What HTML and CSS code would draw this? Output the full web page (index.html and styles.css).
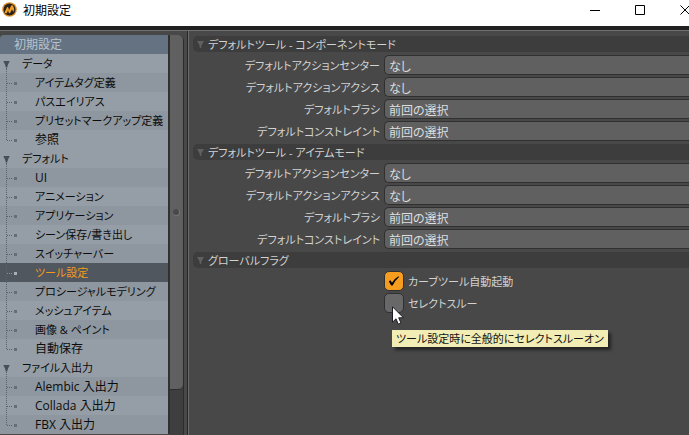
FILE: index.html
```html
<!DOCTYPE html>
<html lang="ja">
<head>
<meta charset="utf-8">
<title>初期設定</title>
<link rel="stylesheet" href="styles.css">
</head>
<body>
<header class="titlebar">
  <svg class="logo" viewBox="0 0 15 15" aria-hidden="true">
    <circle cx="7.5" cy="7.5" r="7.3" fill="#dd922b"/>
    <circle cx="7.5" cy="7.5" r="6" fill="#2b2119"/>
    <path d="M2.500 10.800L4.600 6C5 4.800 6.300 4.800 6.500 6L7 8.200L8.800 4.200C9.300 3 11 3 11.200 4.300L12.200 7.500L11.200 10L10 7.200L8.200 10.800C7.800 11.500 6.900 11.400 6.700 10.600L6 8.300L4.800 11.200Z" fill="#f2a22a"/>
  </svg>
  <h1 class="title">初期設定</h1>
  <button class="winbtn" type="button" aria-label="最小化"><svg viewBox="0 0 10 10"><path d="M0 5.500H10"/></svg></button>
  <button class="winbtn" type="button" aria-label="最大化"><svg viewBox="0 0 10 10"><path d="M.5 .5H9.500V9.500H.5Z"/></svg></button>
  <button class="winbtn winbtn-close" type="button" aria-label="閉じる"><svg viewBox="0 0 10 10"><path d="M.5 .5L9.500 9.500M9.500 .5L.5 9.500"/></svg></button>
</header>
<div class="workspace">
  <nav class="sidebar">
    <div class="tree">
      <div class="tree-head">初期設定</div>
      <ul class="tree-list">
        <li><button type="button" class="row group kana">データ</button>
          <ul class="branch">
            <li><button type="button" class="row leaf kana">アイテムタグ定義</button></li>
            <li><button type="button" class="row leaf kana">パスエイリアス</button></li>
            <li><button type="button" class="row leaf kana">プリセットマークアップ定義</button></li>
            <li><button type="button" class="row leaf">参照</button></li>
          </ul>
        </li>
        <li><button type="button" class="row group kana">デフォルト</button>
          <ul class="branch">
            <li><button type="button" class="row leaf">UI</button></li>
            <li><button type="button" class="row leaf kana">アニメーション</button></li>
            <li><button type="button" class="row leaf kana">アプリケーション</button></li>
            <li><button type="button" class="row leaf kana">シーン保存/書き出し</button></li>
            <li><button type="button" class="row leaf kana">スイッチャーバー</button></li>
            <li><button type="button" class="row leaf kana selected">ツール設定</button></li>
            <li><button type="button" class="row leaf kana">プロシージャルモデリング</button></li>
            <li><button type="button" class="row leaf kana">メッシュアイテム</button></li>
            <li><button type="button" class="row leaf kana">画像 &amp; ペイント</button></li>
            <li><button type="button" class="row leaf">自動保存</button></li>
          </ul>
        </li>
        <li><button type="button" class="row group kana">ファイル入出力</button>
          <ul class="branch">
            <li><button type="button" class="row leaf">Alembic 入出力</button></li>
            <li><button type="button" class="row leaf">Collada 入出力</button></li>
            <li><button type="button" class="row leaf">FBX 入出力</button></li>
          </ul>
        </li>
      </ul>
    </div>
    <div class="scrollbar"><div class="thumb"></div></div>
  </nav>
  <main class="panel">
    <section class="section">
      <h2 class="section-head kana">デフォルトツール - コンポーネントモード</h2>
      <div class="field"><label class="kana" for="c1">デフォルトアクションセンター</label><select id="c1"><option>なし</option></select></div>
      <div class="field"><label class="kana" for="c2">デフォルトアクションアクシス</label><select id="c2"><option>なし</option></select></div>
      <div class="field"><label class="kana" for="c3">デフォルトブラシ</label><select id="c3"><option>前回の選択</option></select></div>
      <div class="field"><label class="kana" for="c4">デフォルトコンストレイント</label><select id="c4"><option>前回の選択</option></select></div>
    </section>
    <section class="section">
      <h2 class="section-head kana">デフォルトツール - アイテムモード</h2>
      <div class="field"><label class="kana" for="i1">デフォルトアクションセンター</label><select id="i1"><option>なし</option></select></div>
      <div class="field"><label class="kana" for="i2">デフォルトアクションアクシス</label><select id="i2"><option>なし</option></select></div>
      <div class="field"><label class="kana" for="i3">デフォルトブラシ</label><select id="i3"><option>前回の選択</option></select></div>
      <div class="field"><label class="kana" for="i4">デフォルトコンストレイント</label><select id="i4"><option>前回の選択</option></select></div>
    </section>
    <section class="section">
      <h2 class="section-head kana">グローバルフラグ</h2>
      <div class="check">
        <span class="box"><input type="checkbox" id="g1" checked><svg class="tick" viewBox="0 0 12 12" aria-hidden="true"><path d="M.8 6.500L2.500 5.300L4 7.800Q6.500 3.500 10.500 1.300L11 2Q7 5.500 4.600 10.500H3.200Z"/></svg></span>
        <label class="kana" for="g1">カーブツール自動起動</label>
      </div>
      <div class="check">
        <span class="box"><input type="checkbox" id="g2" aria-describedby="tip"><svg class="cursor" viewBox="0 0 12 19" aria-hidden="true"><path d="M.5 .8V16.200L4 12.800L6.300 18.200L9 17L6.700 11.800H11.500Z"/></svg><span class="tooltip kana" id="tip" role="tooltip">ツール設定時に全般的にセレクトスルーオン</span></span>
        <label class="kana" for="g2">セレクトスルー</label>
      </div>
    </section>
  </main>
</div>
</body>
</html>
```
FILE: styles.css
```css
* { box-sizing: border-box; }

body {
  margin: 0;
  height: 100vh;
  display: flex;
  flex-direction: column;
  overflow: hidden;
  background: #484848;
  color: #d2d2d2;
  font: 12px/18px "Open Sans", "Noto Sans CJK JP", sans-serif;
  font-feature-settings: "palt";
}

button, select, input { font: inherit; font-feature-settings: inherit; margin: 0; }
ul { list-style: none; margin: 0; padding: 0; }

/* Labels made mostly of kana run one size smaller */
.kana { font-size: 11px; }

.titlebar {
  flex: none;
  height: 30px;
  display: flex;
  align-items: flex-start;
  background: #fff;
  border-bottom: 4px solid #202020;
}
.logo { width: 15px; height: 15px; margin: 2px 6px 0 2px; }
.title { flex: 1; margin: 0; font-size: 12px; font-weight: 400; line-height: 22px; color: #000; }
.winbtn {
  width: 45px;
  height: 20px;
  flex: none;
  padding: 0;
  border: 0;
  background: none;
  display: grid;
  place-items: center;
}
.winbtn svg { width: 10px; height: 10px; fill: none; stroke: #000; }
.winbtn-close { margin-right: -18px; }

.workspace { flex: 1; min-height: 0; display: flex; overflow: hidden; border-top: 1px solid #707070; }

.sidebar {
  width: 189px;
  flex: none;
  display: flex;
  padding-top: 4px;
  border-right: 1px solid #6c6c6c;
  box-shadow: inset -1px 0 #262626;
  overflow: hidden;
}
.tree { width: 170px; height: max-content; border-right: 2px solid #303030; }
.tree-head {
  height: 19px;
  padding: 1px 0 0 14px;
  border-radius: 4px 0 0 0;
  background: #647281;
  color: #b9c3cd;
}
.row {
  display: flex;
  align-items: center;
  width: 100%;
  height: 19px;
  border: 0;
  padding: 1px 0 0;
  background: #959ea6;
  color: #0c0c0c;
  text-align: left;
  white-space: nowrap;
}
.branch li:nth-child(odd) .row { background: #8e979f; }
.group::before {
  content: "";
  width: 7px;
  height: 7px;
  margin: 0 12px 0 3px;
  background: #474e56;
  clip-path: polygon(0 0, 100% 0, 70% 60%, 60% 100%, 40% 100%, 30% 60%);
}
.branch { position: relative; }
.branch::before {
  content: "";
  position: absolute;
  top: -5px;
  bottom: 9px;
  left: 6px;
  border-left: 1px dotted #59616a;
}
.leaf::before {
  content: "";
  flex: none;
  width: 10px;
  height: 3px;
  margin: 0 18px 0 7px;
  background:
    linear-gradient(#656d76, #656d76) right / 3px 3px no-repeat,
    repeating-linear-gradient(90deg, #59616a 0 1px, transparent 1px 2px) 0 1px / 6px 1px no-repeat;
}
.branch li .row.selected { background: #50575f; color: #f59a1b; }
.selected::before {
  background:
    linear-gradient(#a9afb5, #a9afb5) right / 3px 3px no-repeat,
    repeating-linear-gradient(90deg, #8b9299 0 1px, transparent 1px 2px) 0 1px / 6px 1px no-repeat;
}

.scrollbar { width: 14px; background: #3e3e3e; border-right: 1px solid #2c2c2c; border-top-right-radius: 6px; }
.thumb {
  height: 355px;
  background: #606060;
  border-bottom: 1px solid #2c2c2c;
  border-radius: 0 5px 5px 0;
  display: flex;
  align-items: center;
  justify-content: center;
}
.thumb::before { content: ""; width: 6px; height: 6px; border-radius: 50%; background: #484848; border-right: 1px solid #777; border-bottom: 1px solid #777; }

.panel { flex: 1; min-width: 0; padding: 5px 0 0 4px; }
.section { display: flex; flex-direction: column; gap: 2px; margin-bottom: 3px; }
.section-head {
  display: flex;
  align-items: center;
  height: 16px;
  margin: 0 0 1px;
  padding: 1px 0 0 4px;
  border-radius: 5px 0 0 5px;
  background: #3d3d3d;
  font-weight: 400;
}
.section-head::before {
  content: "";
  width: 7px;
  height: 7px;
  margin-right: 4px;
  background: #606060;
  clip-path: polygon(0 0, 100% 0, 65% 60%, 60% 100%, 40% 100%, 35% 60%);
}
.field { display: grid; grid-template-columns: 187px 1fr; column-gap: 4px; align-items: center; }
.field label { padding-top: 2px; text-align: right; }
.field select {
  appearance: none;
  height: 20px;
  padding: 2px 4px 0;
  border: 1px solid #303030;
  border-right: 0;
  border-radius: 5px 0 0 5px;
  background: #606060;
  color: #dedede;
}
.check { display: flex; align-items: center; gap: 4px; height: 20px; padding-left: 191px; }
.check label { padding-top: 2px; }
.box { position: relative; width: 20px; height: 20px; }
.box input {
  appearance: none;
  display: block;
  width: 20px;
  height: 20px;
  border: 1px solid #303030;
  border-radius: 5px;
  background: #686868;
}
.box input:checked { background: #f69c1e; }
.tick { position: absolute; left: 4px; top: 4px; width: 12px; height: 12px; pointer-events: none; }
.cursor { position: absolute; z-index: 2; left: 8px; top: 13px; width: 12px; height: 19px; fill: #fff; stroke: #1b1b24; pointer-events: none; }
.tooltip {
  position: absolute;
  z-index: 1;
  left: 8px;
  top: 37px;
  height: 17px;
  padding: 0 4px;
  line-height: 17px;
  background: #f1edb5;
  color: #111;
  white-space: nowrap;
  box-shadow: 3px 3px 3px rgba(0, 0, 0, .5);
}
```
